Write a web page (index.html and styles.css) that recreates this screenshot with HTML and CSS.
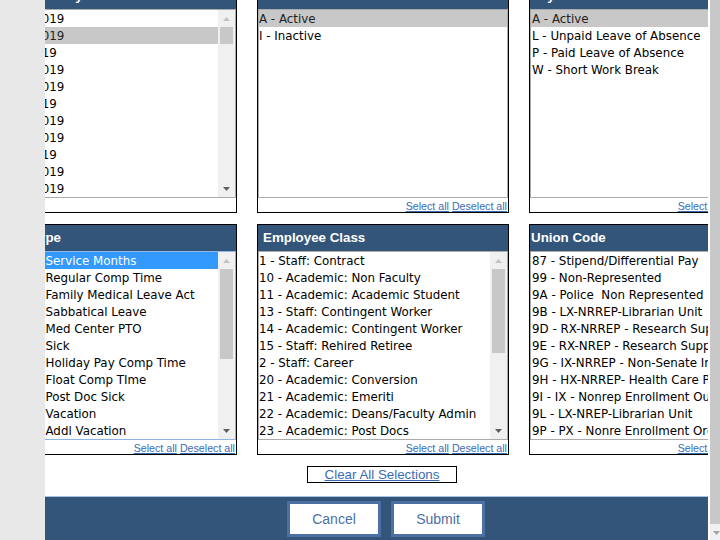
FILE: index.html
```html
<!DOCTYPE html>
<html lang="en">
<head>
<meta charset="utf-8">
<title>Selection Criteria</title>
<link rel="stylesheet" href="styles.css">
</head>
<body>
<div class="window">
  <aside class="sidebar"></aside>
  <main class="viewport">
    <div class="page">
      <div class="grid">
        <!-- Row 1 -->
        <section class="panel">
          <h2 class="panel-head">Accruals Pay End Date</h2>
          <div class="list">
            <ul class="options">
              <li class="opt">12/31/2019</li>
              <li class="opt sel">11/30/2019</li>
              <li class="opt">9/30/2019</li>
              <li class="opt">10/31/2019</li>
              <li class="opt">10/15/2019</li>
              <li class="opt">8/31/2019</li>
              <li class="opt">11/15/2019</li>
              <li class="opt">12/15/2019</li>
              <li class="opt">7/31/2019</li>
              <li class="opt">12/01/2019</li>
              <li class="opt">11/01/2019</li>
            </ul>
            <div class="sb">
              <div class="sb-btn"><svg class="tri-off" width="7" height="4" viewBox="0 0 7 4"><path d="M0 4L3.5 0L7 4Z"/></svg></div>
              <div class="sb-track"><div class="sb-thumb" style="height:17px"></div></div>
              <div class="sb-btn"><svg class="tri-on" width="7" height="4" viewBox="0 0 7 4"><path d="M0 0L3.5 4L7 0Z"/></svg></div>
            </div>
          </div>
          <div class="panel-foot"></div>
        </section>

        <section class="panel mid">
          <h2 class="panel-head">HR Status</h2>
          <div class="list">
            <ul class="options">
              <li class="opt sel">A - Active</li>
              <li class="opt">I - Inactive</li>
            </ul>
          </div>
          <div class="panel-foot"><a href="#">Select all</a> <a href="#">Deselect all</a></div>
        </section>

        <section class="panel edge">
          <h2 class="panel-head">Payroll Status</h2>
          <div class="list">
            <ul class="options">
              <li class="opt sel">A - Active</li>
              <li class="opt">L - Unpaid Leave of Absence</li>
              <li class="opt">P - Paid Leave of Absence</li>
              <li class="opt">W - Short Work Break</li>
            </ul>
          </div>
          <div class="panel-foot"><a href="#">Select all</a> <a href="#">Deselect all</a></div>
        </section>

        <!-- Row 2 -->
        <section class="panel">
          <h2 class="panel-head">Plan Type</h2>
          <div class="list focus">
            <ul class="options">
              <li class="opt cur">50010 - Service Months</li>
              <li class="opt">50020 - Regular Comp Time</li>
              <li class="opt">50030 - Family Medical Leave Act</li>
              <li class="opt">50040 - Sabbatical Leave</li>
              <li class="opt">50050 - Med Center PTO</li>
              <li class="opt">50060 - Sick</li>
              <li class="opt">50070 - Holiday Pay Comp Time</li>
              <li class="opt">50080 - Float Comp TIme</li>
              <li class="opt">50090 - Post Doc Sick</li>
              <li class="opt">50100 - Vacation</li>
              <li class="opt">50110 - Addl Vacation</li>
            </ul>
            <div class="sb">
              <div class="sb-btn"><svg class="tri-off" width="7" height="4" viewBox="0 0 7 4"><path d="M0 4L3.5 0L7 4Z"/></svg></div>
              <div class="sb-track"><div class="sb-thumb" style="height:90px"></div></div>
              <div class="sb-btn"><svg class="tri-on" width="7" height="4" viewBox="0 0 7 4"><path d="M0 0L3.5 4L7 0Z"/></svg></div>
            </div>
          </div>
          <div class="panel-foot"><a href="#">Select all</a> <a href="#">Deselect all</a></div>
        </section>

        <section class="panel mid">
          <h2 class="panel-head">Employee Class</h2>
          <div class="list">
            <ul class="options">
              <li class="opt">1 - Staff: Contract</li>
              <li class="opt">10 - Academic: Non Faculty</li>
              <li class="opt">11 - Academic: Academic Student</li>
              <li class="opt">13 - Staff: Contingent Worker</li>
              <li class="opt">14 - Academic: Contingent Worker</li>
              <li class="opt">15 - Staff: Rehired Retiree</li>
              <li class="opt">2 - Staff: Career</li>
              <li class="opt">20 - Academic: Conversion</li>
              <li class="opt">21 - Academic: Emeriti</li>
              <li class="opt">22 - Academic: Deans/Faculty Admin</li>
              <li class="opt">23 - Academic: Post Docs</li>
            </ul>
            <div class="sb">
              <div class="sb-btn"><svg class="tri-off" width="7" height="4" viewBox="0 0 7 4"><path d="M0 4L3.5 0L7 4Z"/></svg></div>
              <div class="sb-track"><div class="sb-thumb" style="height:84px"></div></div>
              <div class="sb-btn"><svg class="tri-on" width="7" height="4" viewBox="0 0 7 4"><path d="M0 0L3.5 4L7 0Z"/></svg></div>
            </div>
          </div>
          <div class="panel-foot"><a href="#">Select all</a> <a href="#">Deselect all</a></div>
        </section>

        <section class="panel edge">
          <h2 class="panel-head">Union Code</h2>
          <div class="list">
            <ul class="options">
              <li class="opt">87 - Stipend/Differential Pay</li>
              <li class="opt">99 - Non-Represented</li>
              <li class="opt">9A - Police&nbsp; Non Represented</li>
              <li class="opt">9B - LX-NRREP-Librarian Unit</li>
              <li class="opt">9D - RX-NRREP - Research Support</li>
              <li class="opt">9E - RX-NREP - Research Support</li>
              <li class="opt">9G - IX-NRREP - Non-Senate Instructional</li>
              <li class="opt">9H - HX-NRREP- Health Care Professional</li>
              <li class="opt">9I - IX - Nonrep Enrollment Outreach</li>
              <li class="opt">9L - LX-NREP-Librarian Unit</li>
              <li class="opt">9P - PX - Nonre Enrollment Organizing</li>
            </ul>
            <div class="sb">
              <div class="sb-btn"><svg class="tri-off" width="7" height="4" viewBox="0 0 7 4"><path d="M0 4L3.5 0L7 4Z"/></svg></div>
              <div class="sb-track"><div class="sb-thumb" style="height:60px"></div></div>
              <div class="sb-btn"><svg class="tri-on" width="7" height="4" viewBox="0 0 7 4"><path d="M0 0L3.5 4L7 0Z"/></svg></div>
            </div>
          </div>
          <div class="panel-foot"><a href="#">Select all</a> <a href="#">Deselect all</a></div>
        </section>
      </div>

      <div class="clear-row"><a class="clear-btn" href="#">Clear All Selections</a></div>

      <div class="actions">
        <button class="btn" type="button">Cancel</button>
        <button class="btn" type="button">Submit</button>
      </div>
    </div>
  </main>
  <div class="gutter"></div>
  <div class="vscroll">
    <div class="vthumb"></div>
    <div class="varrow"><svg width="7" height="4" viewBox="0 0 7 4"><path d="M0 0L3.5 4L7 0Z"/></svg></div>
  </div>
</div>
</body>
</html>
```
FILE: styles.css
```css
* { box-sizing: border-box; }

html, body {
  margin: 0;
  padding: 0;
}

body {
  width: 720px;
  height: 540px;
  overflow: hidden;
  background: #fff;
  font-family: "DejaVu Sans", Verdana, sans-serif;
}

.window {
  display: flex;
  height: 540px;
}

.sidebar {
  flex: 0 0 45px;
  background: #e8e8e8;
}

.viewport {
  flex: 0 0 663px;
  overflow: hidden;
  background: #fff;
}

.gutter {
  flex: 0 0 2px;
  background: #fff;
}

.vscroll {
  flex: 0 0 10px;
  display: flex;
  flex-direction: column;
  background: #f0f0f0;
}

.vthumb {
  flex: 0 0 524px;
  background: #c8c8c8;
}

.varrow {
  flex: 1;
  padding: 7px 0 0 3px;
}

.varrow svg { display: block; fill: #a3a3a3; }

.page {
  width: 788px;
  margin: -18px 0 0 -52px;
}

.grid {
  display: grid;
  grid-template-columns: 244px 252px 252px;
  gap: 11px 20px;
}

.panel {
  border: 1px solid #000;
  display: flex;
  flex-direction: column;
  background: #fff;
}

.panel-head {
  margin: 0;
  height: 26px;
  padding-left: 5px;
  background: #34557a;
  color: #fff;
  font: bold 13.33px "Liberation Sans", Arial, sans-serif;
  line-height: 26px;
  white-space: nowrap;
  overflow: hidden;
}

.panel.edge .panel-head { padding-left: 1px; }

.list {
  height: 189px;
  border: 1px solid #ababab;
  display: flex;
}

.list.focus { border-color: #8db4e2; }

.options {
  list-style: none;
  margin: 0;
  padding: 0;
  flex: 1;
  min-width: 0;
  overflow: hidden;
  font-size: 11.85px;
  color: #000;
}

.opt {
  height: 17px;
  line-height: 17px;
  padding: 1px 0 0 1px;
  white-space: nowrap;
  overflow: hidden;
}

.panel.mid .opt { padding-left: 0; }

.opt.sel { background: #c8c8c8; color: #222; }
.opt.cur { background: #3399ff; color: #fff; }

.sb {
  flex: 0 0 17px;
  display: flex;
  flex-direction: column;
  background: #f0f0f0;
}

.sb-btn {
  height: 17px;
  display: flex;
  align-items: center;
  justify-content: center;
}

.sb-btn svg { display: block; }
.tri-off { fill: #c2c2c2; }
.tri-on { fill: #606060; }

.sb-track {
  flex: 1;
  padding-left: 2px;
}

.sb-thumb {
  width: 13px;
  background: #c8c8c8;
}

.panel-foot {
  height: 14px;
  text-align: right;
  padding: 1px 1px 0 0;
  font: 10.67px "Liberation Sans", Arial, sans-serif;
  line-height: 15px;
  white-space: nowrap;
  overflow: hidden;
}

.panel-foot a { color: #3a6cb5; }

.clear-row {
  display: flex;
  justify-content: center;
  margin-top: 11px;
  padding-right: 10px;
}

.clear-btn {
  display: block;
  width: 150px;
  height: 17px;
  border: 1px solid #000;
  text-align: center;
  font: 13.33px "Liberation Sans", Arial, sans-serif;
  line-height: 15px;
  color: #3a6cb5;
  text-decoration: underline;
}

.actions {
  margin-top: 13px;
  height: 60px;
  border-top: 1px solid #a9c4e0;
  background: #34557a;
  padding: 4px 2px 0 0;
  display: flex;
  justify-content: center;
  gap: 10px;
}

.btn {
  width: 94px;
  height: 36px;
  padding: 0;
  border: 3px solid #4c70a4;
  background: #fff;
  color: #4c70a4;
  font: 14px "Liberation Sans", Arial, sans-serif;
}
```
